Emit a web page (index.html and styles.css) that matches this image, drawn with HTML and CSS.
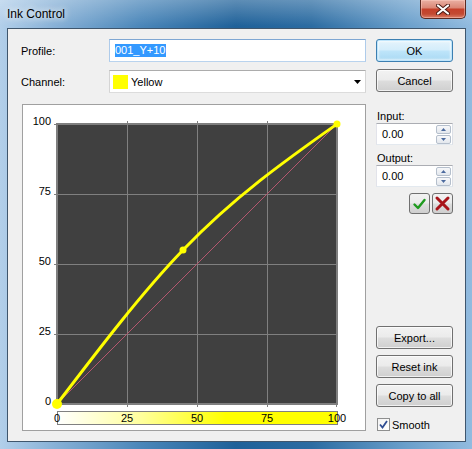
FILE: index.html
```html
<!DOCTYPE html>
<html>
<head>
<meta charset="utf-8">
<link rel="stylesheet" href="styles.css">
</head>
<body>
<div class="window">
  <div class="titlebar">
    <span class="title">Ink Control</span>
    <div class="close">
      <svg width="14" height="11" viewBox="0 0 14 11"><path d="M2 1.5 L12 9.5 M12 1.5 L2 9.5" stroke="#4a1a14" stroke-width="4" stroke-linecap="round"/><path d="M2 1.5 L12 9.5 M12 1.5 L2 9.5" stroke="#ffffff" stroke-width="2.2" stroke-linecap="round"/></svg>
    </div>
  </div>
  <div class="client">
    <div class="left">
      <div class="row">
        <span class="lbl">Profile:</span>
        <div class="field"><span class="sel">001_Y+10</span></div>
      </div>
      <div class="row row2">
        <span class="lbl">Channel:</span>
        <div class="combo">
          <span class="swatch"></span>
          <span class="combo-text">Yellow</span>
          <svg class="arrow" width="7" height="4" viewBox="0 0 7 4"><path d="M0 0 H7 L3.5 4 Z" fill="#000"/></svg>
        </div>
      </div>
      <div class="panel">
        <svg class="chart" width="342" height="325" viewBox="0 0 342 325">
          <defs>
            <linearGradient id="yg" x1="0" x2="1" y1="0" y2="0">
              <stop offset="0" stop-color="#ffffff"/>
              <stop offset="0.3" stop-color="#ffff9c"/>
              <stop offset="0.6" stop-color="#ffff00"/>
              <stop offset="1" stop-color="#ffff00"/>
            </linearGradient>
          </defs>
          <rect x="34" y="19" width="280" height="280" fill="#404040" stroke="#7f7f7f" stroke-width="2"/>
          <g stroke="#808080" stroke-width="1" shape-rendering="crispEdges">
            <line x1="104.5" y1="16" x2="104.5" y2="302"/>
            <line x1="174.5" y1="16" x2="174.5" y2="302"/>
            <line x1="244.5" y1="16" x2="244.5" y2="302"/>
            <line x1="313.5" y1="299" x2="313.5" y2="302"/>
            <line x1="31" y1="89.5" x2="314" y2="89.5"/>
            <line x1="31" y1="159.5" x2="314" y2="159.5"/>
            <line x1="31" y1="229.5" x2="314" y2="229.5"/>
            <line x1="31" y1="19.5" x2="34" y2="19.5"/>
            <line x1="31" y1="298.5" x2="34" y2="298.5"/>
          </g>
          <line x1="34" y1="299" x2="314" y2="19" stroke="#b4576f" stroke-width="1"/>
          <path d="M34 299 C76 243.85 118 188.7 160 145 C211.33 91.59 262.67 55.3 314 19" fill="none" stroke="#ffff00" stroke-width="3"/>
          <circle cx="160" cy="145" r="3.5" fill="#ffff00"/>
          <circle cx="314" cy="19" r="3.5" fill="#ffff00"/>
          <circle cx="34" cy="299" r="5" fill="#ffff00"/>
          <rect x="34.5" y="306.5" width="280" height="13" fill="url(#yg)" stroke="#808080" stroke-width="1"/>
          <g class="ax">
            <text x="28" y="20" text-anchor="end">100</text>
            <text x="28" y="90" text-anchor="end">75</text>
            <text x="28" y="160" text-anchor="end">50</text>
            <text x="28" y="230" text-anchor="end">25</text>
            <text x="28" y="300" text-anchor="end">0</text>
            <text x="34" y="317" text-anchor="middle">0</text>
            <text x="104" y="317" text-anchor="middle">25</text>
            <text x="174" y="317" text-anchor="middle">50</text>
            <text x="244" y="317" text-anchor="middle">75</text>
            <text x="314" y="317" text-anchor="middle">100</text>
          </g>
        </svg>
      </div>
    </div>
    <div class="right">
      <button class="btn default">OK</button>
      <button class="btn cancel">Cancel</button>
      <div class="cap">Input:</div>
      <div class="spin">
        <span class="val">0.00</span>
        <div class="spin-btns">
          <span class="sb"><svg width="5" height="3" viewBox="0 0 5 3"><path d="M0 3 L2.5 0 L5 3 Z" fill="#4c6a9e"/></svg></span>
          <span class="sb"><svg width="5" height="3" viewBox="0 0 5 3"><path d="M0 0 L5 0 L2.5 3 Z" fill="#4c6a9e"/></svg></span>
        </div>
      </div>
      <div class="cap cap2">Output:</div>
      <div class="spin">
        <span class="val">0.00</span>
        <div class="spin-btns">
          <span class="sb"><svg width="5" height="3" viewBox="0 0 5 3"><path d="M0 3 L2.5 0 L5 3 Z" fill="#4c6a9e"/></svg></span>
          <span class="sb"><svg width="5" height="3" viewBox="0 0 5 3"><path d="M0 0 L5 0 L2.5 3 Z" fill="#4c6a9e"/></svg></span>
        </div>
      </div>
      <div class="okx">
        <button class="ibtn"><svg width="19" height="19" viewBox="0 0 19 19"><path d="M4.5 10.5 L8 14 L14.5 6" fill="none" stroke="#1e9a1e" stroke-width="2.4" stroke-linecap="round" stroke-linejoin="round"/></svg></button>
        <button class="ibtn"><svg width="19" height="19" viewBox="0 0 19 19"><path d="M4 4 L15 15 M15 4 L4 15" fill="none" stroke="#a8141a" stroke-width="3" stroke-linecap="round"/></svg></button>
      </div>
      <div class="bottom">
        <button class="btn">Export...</button>
        <button class="btn">Reset ink</button>
        <button class="btn">Copy to all</button>
        <div class="chk">
          <span class="box"><svg width="11" height="11" viewBox="0 0 11 11"><path d="M2 5.5 L4.5 8.5 L9 2" fill="none" stroke="#2f4d93" stroke-width="1.8"/></svg></span>
          <span>Smooth</span>
        </div>
      </div>
    </div>
  </div>
</div>
</body>
</html>
```

FILE: styles.css
```css
* {
  box-sizing: border-box;
}

body {
  margin: 0;
}

.window {
  width: 472px;
  height: 449px;
  display: flex;
  flex-direction: column;
  font-family: "Liberation Sans", Arial, sans-serif;
  font-size: 11px;
  color: #000;
  background:
    linear-gradient(to bottom, rgba(255, 255, 255, 0.28) 0px, rgba(255, 255, 255, 0) 26px),
    linear-gradient(to right, #b2cfea 0%, #86b0d6 12%, #4a86b9 30%, #1f6199 50%, #2c6ca2 66%, #6a9fcb 86%, #92bbdf 100%);
}

.titlebar {
  height: 28px;
  display: flex;
  align-items: flex-start;
  padding-left: 7px;
}

.title {
  line-height: 28px;
  font-size: 12px;
  text-shadow: 0 0 6px rgba(255, 255, 255, 0.95), 0 0 10px rgba(255, 255, 255, 0.7);
}

.close {
  margin-left: auto;
  margin-right: 6px;
  width: 46px;
  height: 19px;
  border: 1px solid #5b2a22;
  border-top: none;
  border-radius: 0 0 5px 5px;
  background: linear-gradient(to bottom, #eab0a3 0%, #db8877 42%, #c5402a 52%, #c34a32 78%, #dc7f69 100%);
  display: flex;
  align-items: center;
  justify-content: center;
  box-shadow: inset 0 0 0 1px rgba(255, 210, 200, 0.45);
}

.client {
  flex: 1;
  margin: 0 6px 7px 7px;
  border: 1px solid #3f566d;
  background: #f0f0f0;
  display: flex;
  gap: 10px;
  padding: 10px 12px 10px 13px;
}

.left {
  width: 345px;
  display: flex;
  flex-direction: column;
}

.row {
  display: flex;
  align-items: center;
  height: 23px;
}

.row2 {
  margin-top: 8px;
}

.lbl {
  width: 88px;
}

.field {
  flex: 1;
  height: 23px;
  border: 1px solid;
  border-color: #7fa7d3 #aecbea #b9d3ee #aecbea;
  background: #fff;
  padding-left: 5px;
  display: flex;
  align-items: center;
}

.sel {
  background: #3399ff;
  color: #fff;
  line-height: 13px;
  padding: 0 1px 0 0;
}

.combo {
  flex: 1;
  height: 23px;
  border: 1px solid;
  border-color: #acacac #d5d5d5 #dcdcdc #d5d5d5;
  background: #fff;
  display: flex;
  align-items: center;
  padding-left: 3px;
}

.swatch {
  width: 15px;
  height: 14px;
  background: #ffff00;
  margin-right: 3px;
}

.arrow {
  margin-left: auto;
  margin-right: 4px;
}

.panel {
  margin: 11px 0 0 1px;
  width: 344px;
  height: 327px;
  border: 1px solid #a0a0a0;
  background: #fff;
}

.chart {
  display: block;
}

.ax text {
  font-family: "Liberation Sans", Arial, sans-serif;
  font-size: 11px;
  fill: #000;
}

.right {
  width: 77px;
  display: flex;
  flex-direction: column;
}

.btn {
  width: 77px;
  height: 23px;
  padding: 0;
  font: inherit;
  color: #000;
  border: 1px solid #707070;
  border-radius: 3px;
  background: linear-gradient(to bottom, #f2f2f2 0%, #ebebeb 48%, #dddddd 52%, #cfcfcf 100%);
  box-shadow: inset 0 0 0 1px rgba(255, 255, 255, 0.7);
}

.btn.default {
  border-color: #3c7fb1;
  background: linear-gradient(to bottom, #e5f4fc 0%, #d4edfb 48%, #bee5fa 52%, #a8d8f3 100%);
  box-shadow: inset 0 0 0 1px #bfe5fb, inset 0 0 2px 2px rgba(255, 255, 255, 0.6);
}

.cancel {
  margin-top: 7px;
}

.cap {
  margin-top: 18px;
  line-height: 13px;
  height: 13px;
  padding-left: 1px;
}

.cap2 {
  margin-top: 7px;
}

.spin {
  height: 22px;
  border: 1px solid;
  border-color: #abadb3 #dbdfe6 #e3e9ef #e2e3ea;
  background: #fff;
  display: flex;
  align-items: center;
  padding-left: 5px;
}

.spin-btns {
  margin-left: auto;
  margin-right: 1px;
  width: 15px;
  display: flex;
  flex-direction: column;
  gap: 1px;
}

.sb {
  height: 9px;
  border: 1px solid #b5bfcc;
  border-radius: 2px;
  background: linear-gradient(to bottom, #f7f8fa, #e3e7ed);
  display: flex;
  align-items: center;
  justify-content: center;
}

.sb svg {
  display: block;
}

.okx {
  margin-top: 6px;
  display: flex;
  justify-content: flex-end;
  gap: 2px;
}

.ibtn {
  width: 21px;
  height: 21px;
  padding: 0;
  border: 1px solid #707070;
  border-radius: 3px;
  background: linear-gradient(to bottom, #f2f2f2 0%, #ebebeb 48%, #dddddd 52%, #cfcfcf 100%);
  display: flex;
  align-items: center;
  justify-content: center;
}

.ibtn svg {
  display: block;
}

.bottom {
  margin-top: auto;
  display: flex;
  flex-direction: column;
  gap: 6px;
}

.chk {
  margin-top: 5px;
  height: 13px;
  display: flex;
  align-items: center;
  gap: 2px;
  padding-left: 1px;
}

.box {
  width: 13px;
  height: 13px;
  border: 1px solid #8e8f8f;
  background: linear-gradient(to bottom right, #f3f3f3, #ffffff);
  display: flex;
  align-items: center;
  justify-content: center;
}

.box svg {
  display: block;
}
```
